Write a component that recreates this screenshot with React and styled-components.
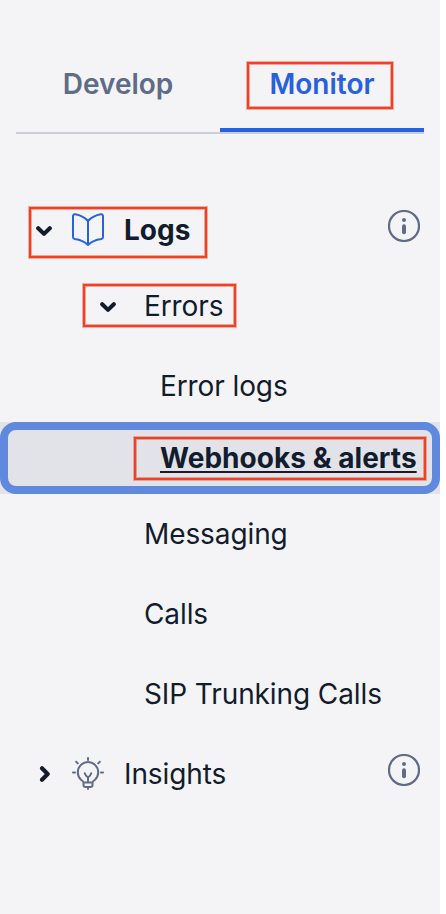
import React from 'react';
import styled, { createGlobalStyle } from 'styled-components';

const Global = createGlobalStyle`
  * { box-sizing: border-box; }
  body { margin: 0; background: #fff; font-family: Inter, sans-serif; }
`;

const Sidebar = styled.nav`
  width: 440px;
  height: 914px;
  background: #f4f4f6;
  color: #121c2d;
  font-size: 28px;
  line-height: 40px;
  overflow: hidden;
`;

const Tabs = styled.div`
  display: grid;
  grid-template-columns: 204px 204px;
  height: 98px;
  margin: 36px 16px 60px;
  border-bottom: 2px solid #cacdd8;
`;

const Tab = styled.div`
  display: flex;
  justify-content: center;
  padding-top: 28px;
  font-weight: 600;
  color: ${(p) => (p.$active ? '#2860de' : '#606b85')};
  border-bottom: ${(p) => (p.$active ? '4px solid #2860de' : 'none')};
`;

const Row = styled.div`
  position: relative;
  display: flex;
  align-items: center;
  height: 72px;
  margin-bottom: ${(p) => p.$gap ?? 8}px;
  padding-left: ${(p) => p.$indent}px;
`;

const SelectedRow = styled(Row)`
  background: #e1e3e8;
  &::before {
    content: '';
    position: absolute;
    inset: 0;
    border: 8px solid #5f88de;
    border-radius: 16px;
  }
`;

const Label = styled.span`
  position: relative;
  white-space: nowrap;
  letter-spacing: ${(p) => (p.$bold ? 0.04 : -0.1)}px;
  font-weight: ${(p) => (p.$bold ? 700 : 400)};
`;

const ActiveLabel = styled(Label)`
  text-decoration: underline;
  text-decoration-thickness: 2px;
  text-underline-offset: 3px;
  text-decoration-skip-ink: none;
`;

const Arrow = styled.svg`
  flex: none;
  width: 16px;
  height: 16px;
  margin-right: ${(p) => p.$after}px;
`;

const Glyph = styled.svg`
  flex: none;
  width: 32px;
  height: 34px;
  margin-right: 20px;
`;

const InfoSvg = styled.svg`
  width: 32px;
  height: 32px;
  margin: 0 20px 8px auto;
`;

const Highlight = styled.span`
  position: absolute;
  left: ${(p) => p.$x}px;
  top: ${(p) => p.$y}px;
  width: ${(p) => p.$w}px;
  height: ${(p) => p.$h}px;
  border: 2px solid #ef4123;
  box-shadow: 0 0 0 1px rgba(239, 65, 35, 0.4), inset 0 0 0 1px rgba(239, 65, 35, 0.45);
  pointer-events: none;
`;

const TabText = styled.span`
  position: relative;
  height: 40px;
`;

const Chevron = ({ open, after }) => (
  <Arrow $after={after} viewBox="0 0 16 16" fill="none" stroke="#121c2d" strokeWidth="4.1" strokeLinecap="round" strokeLinejoin="round">
    <path d={open ? 'M2.2 6.200l5.800 5.700 5.800-5.700' : 'M6 2.200l5.700 5.800-5.700 5.800'} />
  </Arrow>
);

const Book = () => (
  <Glyph viewBox="0 0 32 34" fill="none" stroke="#2860de" strokeWidth="2" strokeLinecap="round" strokeLinejoin="round">
    <path d="M16 8C12.500 4.300 8.500 2.200 3.200 1.300C1.800 1.100 1 1.900 1 3.200V24C1 25.300 1.800 25.800 2.800 26C8 26.700 12.500 28.500 16 32C19.500 28.500 24 26.700 29.200 26C30.200 25.800 31 25.300 31 24V3.200C31 1.900 30.200 1.100 28.800 1.300C23.500 2.200 19.500 4.300 16 8V32" />
  </Glyph>
);

const Bulb = () => (
  <Glyph viewBox="0 0 32 34" fill="none" stroke="#606b85" strokeWidth="2" strokeLinecap="round" strokeLinejoin="round">
    <path d="M11.500 25.500C11.500 24.500 10 23.500 9 22.700A10.200 10.200 0 1 1 23 22.700C22 23.500 20.500 24.500 20.500 25.500V28Q20.500 30 18.500 30H13.500Q11.500 30 11.500 28ZM11.500 25.500H20.500M16 25.500V20.500M12.800 16.300Q13.500 19 16 20.500Q18.500 19 19.200 16.300M16 30.500V32M16 1V3M4.200 4.800L5.800 6.400M27.800 4.800L26.200 6.400M1 15.500H3M29 15.500H31" />
  </Glyph>
);

const Info = () => (
  <InfoSvg viewBox="0 0 32 32" fill="none" stroke="#606b85">
    <circle cx="16" cy="16" r="15" strokeWidth="2.200" />
    <path d="M16 16.200V22.300" strokeWidth="4" strokeLinecap="round" />
    <circle cx="16" cy="10" r="2" fill="#606b85" stroke="none" />
  </InfoSvg>
);

export default function App() {
  return (
    <>
      <Global />
      <Sidebar>
        <Tabs>
          <Tab><TabText>Develop</TabText></Tab>
          <Tab $active>
            <TabText>
              Monitor
              <Highlight $x={-22} $y={-2} $w={146} $h={47} />
            </TabText>
          </Tab>
        </Tabs>
        <Row $indent={36} $gap={4}>
          <Chevron open after={20} />
          <Book />
          <Label $bold>Logs</Label>
          <Info />
          <Highlight $x={29} $y={13} $w={178} $h={51} />
        </Row>
        <Row $indent={100}>
          <Chevron open after={28} />
          <Label>Errors</Label>
          <Highlight $x={83} $y={14} $w={153} $h={43} />
        </Row>
        <Row $indent={160} $gap={0}><Label>Error logs</Label></Row>
        <SelectedRow $indent={160} $gap={4}>
          <ActiveLabel $bold>Webhooks &amp; alerts</ActiveLabel>
          <Highlight $x={134} $y={15} $w={292} $h={43} />
        </SelectedRow>
        <Row $indent={144}><Label>Messaging</Label></Row>
        <Row $indent={144}><Label>Calls</Label></Row>
        <Row $indent={144}><Label>SIP Trunking Calls</Label></Row>
        <Row $indent={36}>
          <Chevron after={20} />
          <Bulb />
          <Label>Insights</Label>
          <Info />
        </Row>
      </Sidebar>
    </>
  );
}
